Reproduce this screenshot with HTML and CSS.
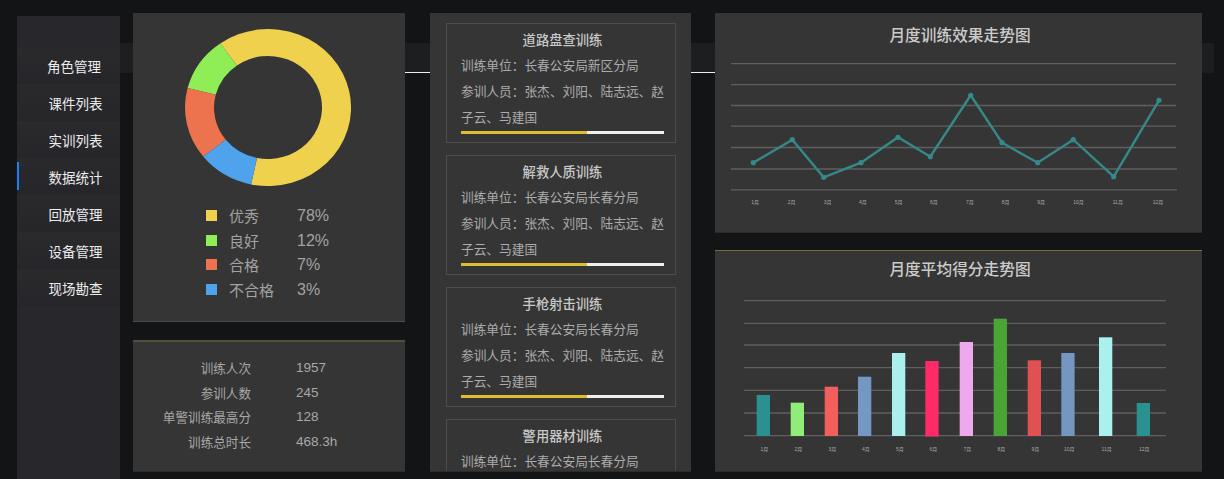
FILE: index.html
```html
<!DOCTYPE html>
<html lang="zh-CN">
<head>
    <meta charset="UTF-8">
    <title>数据统计</title>
    <link rel="stylesheet" href="styles.css">
</head>
<body>
<div class="page">
    <nav class="sidebar">
        <a class="nav-item first">角色管理</a>
        <a class="nav-item">课件列表</a>
        <a class="nav-item">实训列表</a>
        <a class="nav-item active">数据统计</a>
        <a class="nav-item">回放管理</a>
        <a class="nav-item">设备管理</a>
        <a class="nav-item">现场勘查</a>
    </nav>

    <main class="main">
        <span class="link link-left"></span>
        <span class="link link-right"></span>

        <div class="col col-left">
            <section class="panel panel-donut">
                <svg class="donut" viewBox="133 13 272 190" width="272" height="190">
                    <path fill="#efd14d" d="M220.2 43.4 A83 78.5 0 1 1 251.1 184.4 L257 157.9 A54 51.5 0 1 0 236.9 65.4 Z"/>
                    <path fill="#8fee55" d="M187.6 88.1 A83 78.5 0 0 1 220.2 43.4 L236.9 65.4 A54 51.5 0 0 0 215.7 94.8 Z"/>
                    <path fill="#ec734e" d="M203.2 156.6 A83 78.5 0 0 1 187.6 88.1 L215.7 94.8 A54 51.5 0 0 0 225.8 139.7 Z"/>
                    <path fill="#4fa3ec" d="M251.1 184.4 A83 78.5 0 0 1 203.2 156.6 L225.8 139.7 A54 51.5 0 0 0 257 157.9 Z"/>
                </svg>
                <ul class="legend">
                    <li><i class="swatch yellow"></i><span class="legend-name">优秀</span><span class="legend-value">78%</span></li>
                    <li><i class="swatch green"></i><span class="legend-name">良好</span><span class="legend-value">12%</span></li>
                    <li><i class="swatch orange"></i><span class="legend-name">合格</span><span class="legend-value">7%</span></li>
                    <li><i class="swatch blue"></i><span class="legend-name">不合格</span><span class="legend-value">3%</span></li>
                </ul>
            </section>
            <section class="panel panel-stats">
                <div class="stat"><span class="stat-name">训练人次</span><span>1957</span></div>
                <div class="stat"><span class="stat-name">参训人数</span><span>245</span></div>
                <div class="stat"><span class="stat-name">单警训练最高分</span><span>128</span></div>
                <div class="stat"><span class="stat-name">训练总时长</span><span>468.3h</span></div>
            </section>
        </div>

        <section class="panel col col-mid">
            <article class="card">
                <h3>道路盘查训练</h3>
                <p>训练单位：长春公安局新区分局</p>
                <p>参训人员：张杰、刘阳、陆志远、赵子云、马建国</p>
                <div class="progress"><div class="progress-fill"></div></div>
            </article>
            <article class="card">
                <h3>解救人质训练</h3>
                <p>训练单位：长春公安局长春分局</p>
                <p>参训人员：张杰、刘阳、陆志远、赵子云、马建国</p>
                <div class="progress"><div class="progress-fill"></div></div>
            </article>
            <article class="card">
                <h3>手枪射击训练</h3>
                <p>训练单位：长春公安局长春分局</p>
                <p>参训人员：张杰、刘阳、陆志远、赵子云、马建国</p>
                <div class="progress"><div class="progress-fill"></div></div>
            </article>
            <article class="card">
                <h3>警用器材训练</h3>
                <p>训练单位：长春公安局长春分局</p>
            </article>
        </section>

        <div class="col col-right">
            <section class="panel panel-line">
                <h2>月度训练效果走势图</h2>
                <svg class="chart" viewBox="715 48 487 185" width="487" height="185">
                    <g class="grid">
                        <line x1="731" x2="1176" y1="63.7" y2="63.7"/>
                        <line x1="731" x2="1176" y1="84.7" y2="84.7"/>
                        <line x1="731" x2="1176" y1="105.5" y2="105.5"/>
                        <line x1="731" x2="1176" y1="126.2" y2="126.2"/>
                        <line x1="731" x2="1176" y1="147.5" y2="147.5"/>
                        <line x1="731" x2="1177" y1="169" y2="169"/>
                        <line x1="731" x2="1177" y1="189.8" y2="189.8"/>
                    </g>
                    <polyline class="trend" points="753.3,162.7 792.3,139.7 823.7,177.3 861,162.7 898,137.3 930.3,156.7 970.7,95.3 1002,142.7 1037.7,162.7 1073.3,139.7 1113.7,176.7 1159,100.3"/>
                    <g class="dots">
                        <circle cx="753.3" cy="162.7" r="2.6"/>
                        <circle cx="792.3" cy="139.7" r="2.6"/>
                        <circle cx="823.7" cy="177.3" r="2.6"/>
                        <circle cx="861" cy="162.7" r="2.6"/>
                        <circle cx="898" cy="137.3" r="2.6"/>
                        <circle cx="930.3" cy="156.7" r="2.6"/>
                        <circle cx="970.7" cy="95.3" r="2.6"/>
                        <circle cx="1002" cy="142.7" r="2.6"/>
                        <circle cx="1037.7" cy="162.7" r="2.6"/>
                        <circle cx="1073.3" cy="139.7" r="2.6"/>
                        <circle cx="1113.7" cy="176.7" r="2.6"/>
                        <circle cx="1159" cy="100.3" r="2.6"/>
                    </g>
                    <g class="ticks">
                        <text x="751.3" y="204">1月</text>
                        <text x="787.7" y="204">2月</text>
                        <text x="823.7" y="204">3月</text>
                        <text x="859" y="204">4月</text>
                        <text x="894.7" y="204">5月</text>
                        <text x="930" y="204">6月</text>
                        <text x="966" y="204">7月</text>
                        <text x="1001.7" y="204">8月</text>
                        <text x="1037.3" y="204">9月</text>
                        <text x="1073.3" y="204">10月</text>
                        <text x="1112.7" y="204">11月</text>
                        <text x="1152.7" y="204">12月</text>
                    </g>
                </svg>
            </section>
            <section class="panel panel-bar">
                <h2>月度平均得分走势图</h2>
                <svg class="chart" viewBox="715 280 487 192" width="487" height="192">
                    <g class="grid">
                        <line x1="744" x2="1166" y1="300.7" y2="300.7"/>
                        <line x1="744" x2="1166" y1="323.3" y2="323.3"/>
                        <line x1="744" x2="1166" y1="345" y2="345"/>
                        <line x1="744" x2="1166" y1="367.7" y2="367.7"/>
                        <line x1="744" x2="1166" y1="390.3" y2="390.3"/>
                        <line x1="744" x2="1166" y1="413" y2="413"/>
                        <line x1="744" x2="1166" y1="435.7" y2="435.7"/>
                    </g>
                    <rect fill="#2a9090" x="756.7" y="395" width="13.3" height="41"/>
                    <rect fill="#90ee78" x="790.7" y="402.7" width="13.3" height="33.3"/>
                    <rect fill="#f25f5c" x="824.7" y="386.7" width="13.3" height="49.3"/>
                    <rect fill="#7398c2" x="858" y="376.7" width="13.3" height="59.3"/>
                    <rect fill="#aaf0ee" x="892" y="353" width="13.3" height="83"/>
                    <rect fill="#ff2a68" x="925.3" y="361" width="13.3" height="75.5"/>
                    <rect fill="#eea8ec" x="959.7" y="342" width="13.3" height="94"/>
                    <rect fill="#4aa537" x="993.7" y="318.7" width="13.3" height="117.3"/>
                    <rect fill="#e05252" x="1027.7" y="360.3" width="13.3" height="75.7"/>
                    <rect fill="#7596c0" x="1061.3" y="353" width="13.3" height="83"/>
                    <rect fill="#aaf0ee" x="1099" y="337.3" width="13.3" height="98.7"/>
                    <rect fill="#2a9090" x="1136.7" y="403" width="13.3" height="33"/>
                    <g class="ticks">
                        <text x="760.5" y="450.5">1月</text>
                        <text x="794.5" y="450.5">2月</text>
                        <text x="828.5" y="450.5">3月</text>
                        <text x="862" y="450.5">4月</text>
                        <text x="896" y="450.5">5月</text>
                        <text x="929.5" y="450.5">6月</text>
                        <text x="963.5" y="450.5">7月</text>
                        <text x="997.5" y="450.5">8月</text>
                        <text x="1031.5" y="450.5">9月</text>
                        <text x="1064" y="450.5">10月</text>
                        <text x="1101.5" y="450.5">11月</text>
                        <text x="1139" y="450.5">12月</text>
                    </g>
                </svg>
            </section>
        </div>
    </main>
</div>
</body>
</html>
```

FILE: styles.css
```css
* {
    box-sizing: border-box;
}

body {
    margin: 0;
    background: #131416;
    font-family: "Liberation Sans", "Noto Sans CJK SC", sans-serif;
}

.page {
    display: flex;
    width: 1224px;
    height: 479px;
    overflow: hidden;
    padding-left: 17px;
}

/* sidebar */
.sidebar {
    flex: none;
    width: 103px;
    margin-top: 16px;
    padding-top: 31px;
    background: #28282c;
}

.nav-item {
    display: flex;
    align-items: center;
    height: 37px;
    padding-left: 29.5px;
    border-left: 2px solid transparent;
    background: linear-gradient(#2a2a2d, #26262a);
    color: #ececec;
    font-size: 13.5px;
}

.nav-item.first {
    padding-left: 28px;
}

.nav-item.active {
    position: relative;
}

.nav-item.active::before {
    content: "";
    position: absolute;
    left: -2px;
    top: 4px;
    width: 2px;
    height: 28px;
    background: #0a84ff;
}

/* main area */
.main {
    position: relative;
    flex: none;
    display: flex;
    width: 1099px;
    height: 479px;
    padding: 13px 0 7px 13px;
}

.main::before {
    content: "";
    position: absolute;
    left: 0;
    right: 5px;
    top: 43px;
    height: 30px;
    background: #1d1e1f;
}

.link {
    position: absolute;
    top: 72px;
    height: 1px;
    background: #eee;
}

.link-left {
    left: 284px;
    width: 27px;
}

.link-right {
    left: 570px;
    width: 26px;
}

.panel {
    position: relative;
    background: #353535;
}

.col {
    position: relative;
    flex: none;
    display: flex;
    flex-direction: column;
}

.col-left {
    width: 272px;
    gap: 18px;
}

.col-right {
    width: 487px;
    gap: 17px;
}

/* donut + legend */
.panel-donut {
    height: 309px;
    border-bottom: 1px solid #4b4b4b;
}

.donut {
    display: block;
}

.legend {
    list-style: none;
    margin: 0;
    padding: 0 0 0 73px;
    color: #a2a2a2;
    font-size: 15px;
}

.legend li {
    display: flex;
    align-items: center;
    height: 24.7px;
}

.legend-value {
    padding-top: 1px;
    font-size: 16px;
}

.swatch {
    width: 11px;
    height: 11px;
    margin-right: 12px;
}

.swatch.yellow { background: #efd14d; }
.swatch.green { background: #8fee55; }
.swatch.orange { background: #ec734e; }
.swatch.blue { background: #4fa3ec; }

.legend-name {
    width: 68px;
}

/* stats */
.panel-stats {
    flex: 1;
    padding-top: 13px;
    border-top: 2px solid #50503c;
    border-bottom: 1px solid #2b2b2b;
    color: #a8a8a8;
}

.stat {
    display: flex;
    align-items: center;
    height: 24.8px;
    font-size: 13.5px;
}

.stat-name {
    width: 118px;
    margin-right: 45px;
    text-align: right;
    font-size: 12.6px;
}

/* training cards */
.col-mid {
    width: 261px;
    margin: 0 24px 0 25px;
    padding: 10px 15px 0 16px;
    gap: 12px;
    overflow: hidden;
    border-bottom: 1px solid #2b2b2b;
}

.card {
    flex: none;
    height: 120px;
    padding: 6px 11px 0 14px;
    border: 1px solid #4d4d4d;
    color: #acacac;
    font-size: 12.7px;
}

.card h3 {
    margin: 0 0 1.5px;
    height: 21px;
    line-height: 21px;
    text-align: center;
    color: #c8c8c8;
    font-size: 13.3px;
    font-weight: 500;
}

.card p {
    margin: 0;
    padding-top: 1px;
    line-height: 25.5px;
}

.progress {
    height: 3px;
    background: #efefef;
}

.progress-fill {
    width: 62%;
    height: 100%;
    background: #dfbd32;
}

/* charts */
.panel-line {
    height: 220px;
    border-bottom: 1px solid #2b2b2b;
}

.panel-bar {
    height: 222px;
    border-top: 1px solid #6f6f38;
    border-bottom: 1px solid #2b2b2b;
}

.panel-line h2,
.panel-bar h2 {
    margin: 0;
    height: 35px;
    padding: 11px 0 0 3px;
    line-height: 24px;
    text-align: center;
    color: #cbcbcb;
    font-size: 15.7px;
    font-weight: 500;
}

.panel-bar h2 {
    height: 29px;
    padding-top: 7px;
}

.chart {
    display: block;
}

.grid line {
    stroke: #5f5f5f;
    stroke-width: 1.3;
}

.trend {
    fill: none;
    stroke: #35898a;
    stroke-width: 2.4;
}

.dots circle {
    fill: #35898a;
}

.ticks text {
    fill: #a8a8a8;
    font-size: 5px;
}
```
